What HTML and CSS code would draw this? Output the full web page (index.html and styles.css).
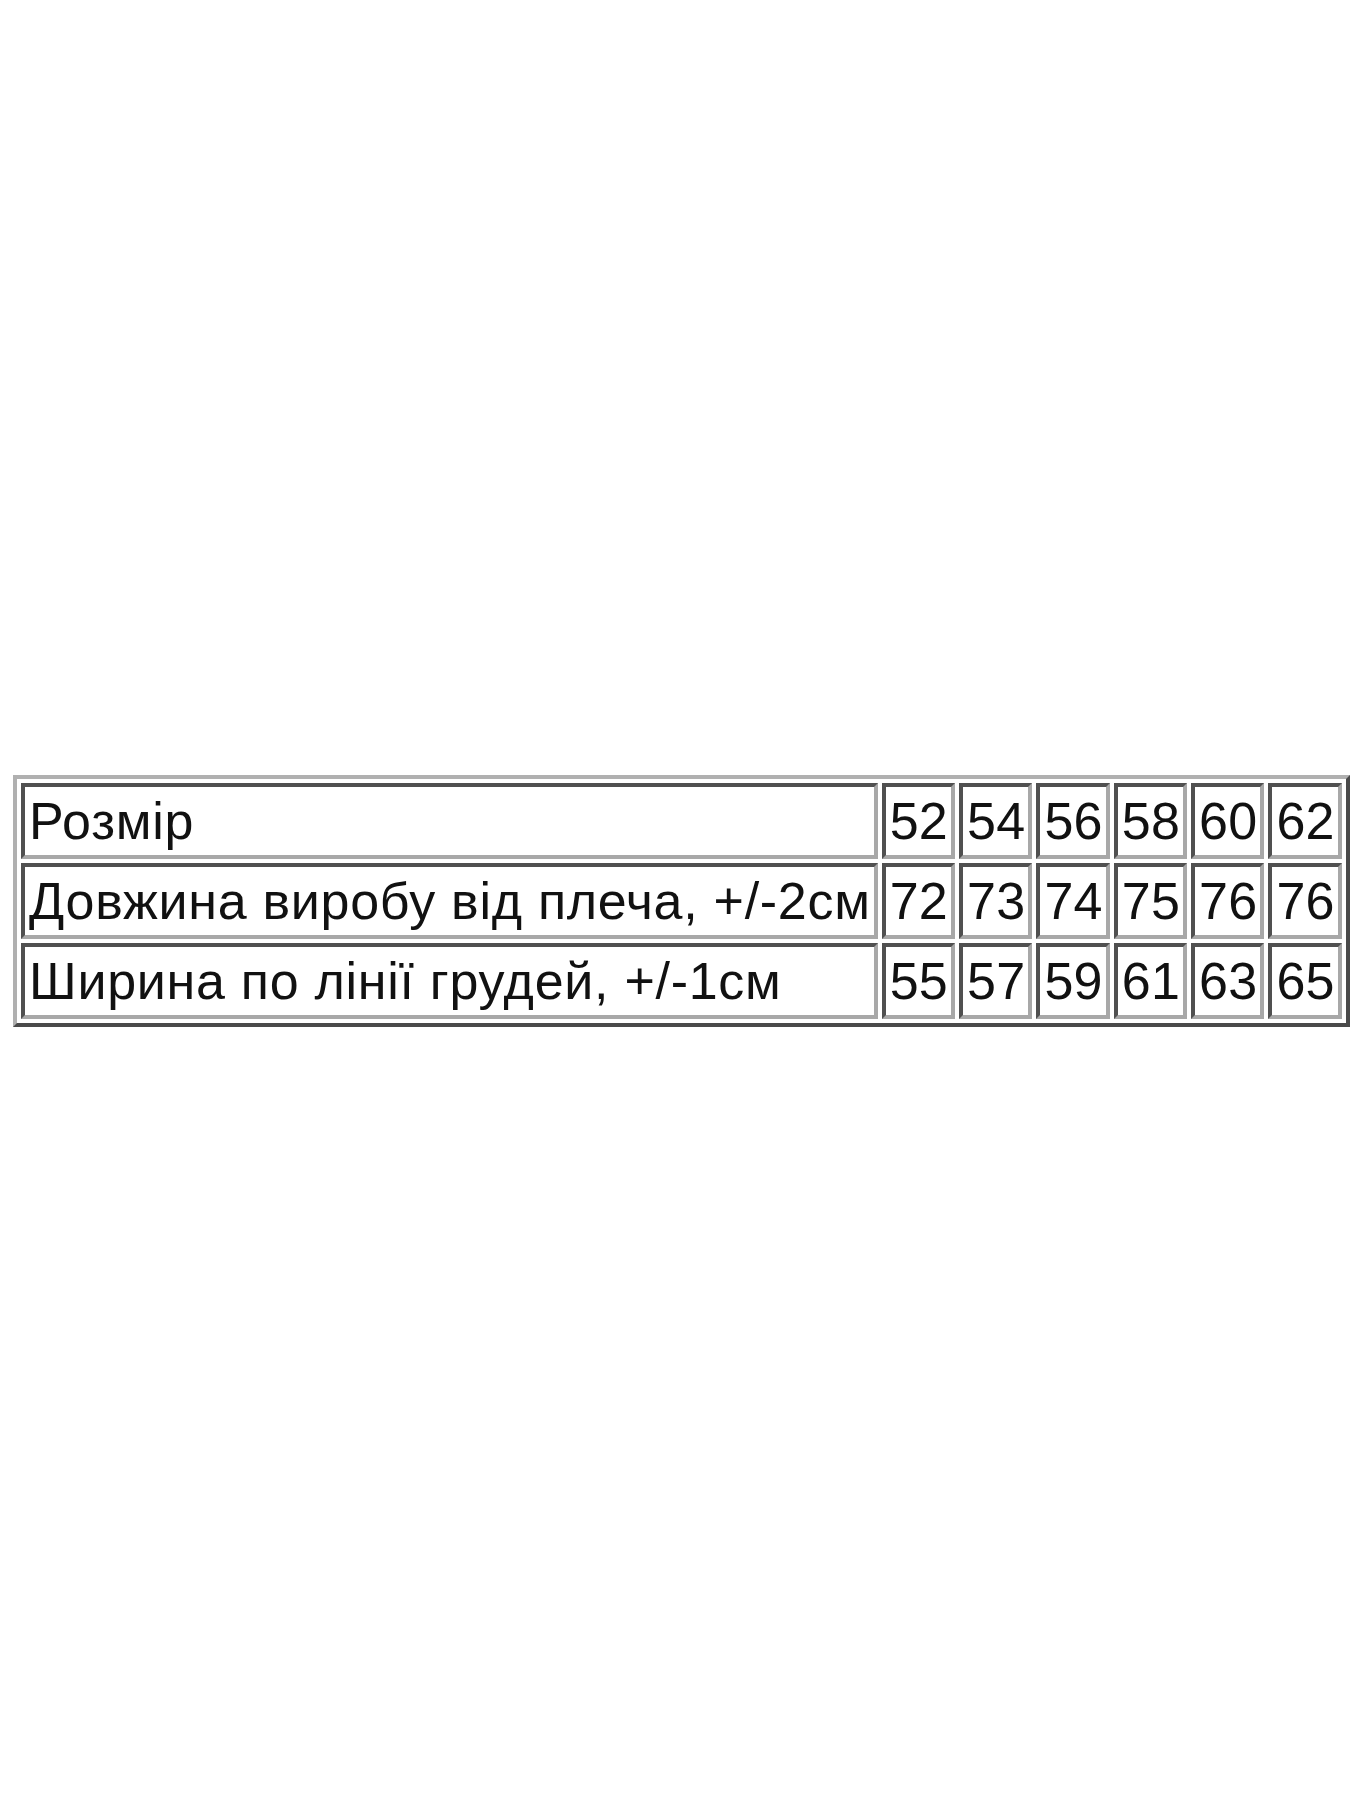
FILE: index.html
```html
<!DOCTYPE html>
<html lang="uk">
<head>
<meta charset="utf-8">
<title>Розмірна сітка</title>
<link rel="stylesheet" href="styles.css">
</head>
<body>
<main class="page">
  <table class="sizes">
    <tbody>
      <tr>
        <td class="label">Розмір</td>
        <td>52</td><td>54</td><td>56</td><td>58</td><td>60</td><td>62</td>
      </tr>
      <tr>
        <td class="label">Довжина виробу від плеча, +/-2см</td>
        <td>72</td><td>73</td><td>74</td><td>75</td><td>76</td><td>76</td>
      </tr>
      <tr>
        <td class="label">Ширина по лінії грудей, +/-1см</td>
        <td>55</td><td>57</td><td>59</td><td>61</td><td>63</td><td>65</td>
      </tr>
    </tbody>
  </table>
</main>
</body>
</html>
```

FILE: styles.css
```css
html, body {
  margin: 0;
  padding: 0;
  background: #ffffff;
}

.page {
  width: 1350px;
  height: 1800px;
  overflow: hidden;
  padding-top: 775px;
  padding-left: 13px;
  box-sizing: border-box;
}

.sizes {
  border-collapse: separate;
  border-spacing: 4px;
  border-style: solid;
  border-width: 4px;
  border-color: #b0b0b0 #4a4a4a #4a4a4a #b0b0b0;
  font-family: "Liberation Sans", Arial, sans-serif;
  font-size: 52px;
  line-height: 60px;
  color: #111111;
  white-space: nowrap;
}

.sizes td {
  border-style: solid;
  border-width: 4px;
  border-color: #505050 #a8a8a8 #a8a8a8 #505050;
  padding: 4px 3px 4px 4px;
  text-align: left;
  vertical-align: middle;
  letter-spacing: 0.25px;
}

.sizes td.label {
  padding: 4px 3px 4px 4px;
  letter-spacing: 0.72px;
}
```
